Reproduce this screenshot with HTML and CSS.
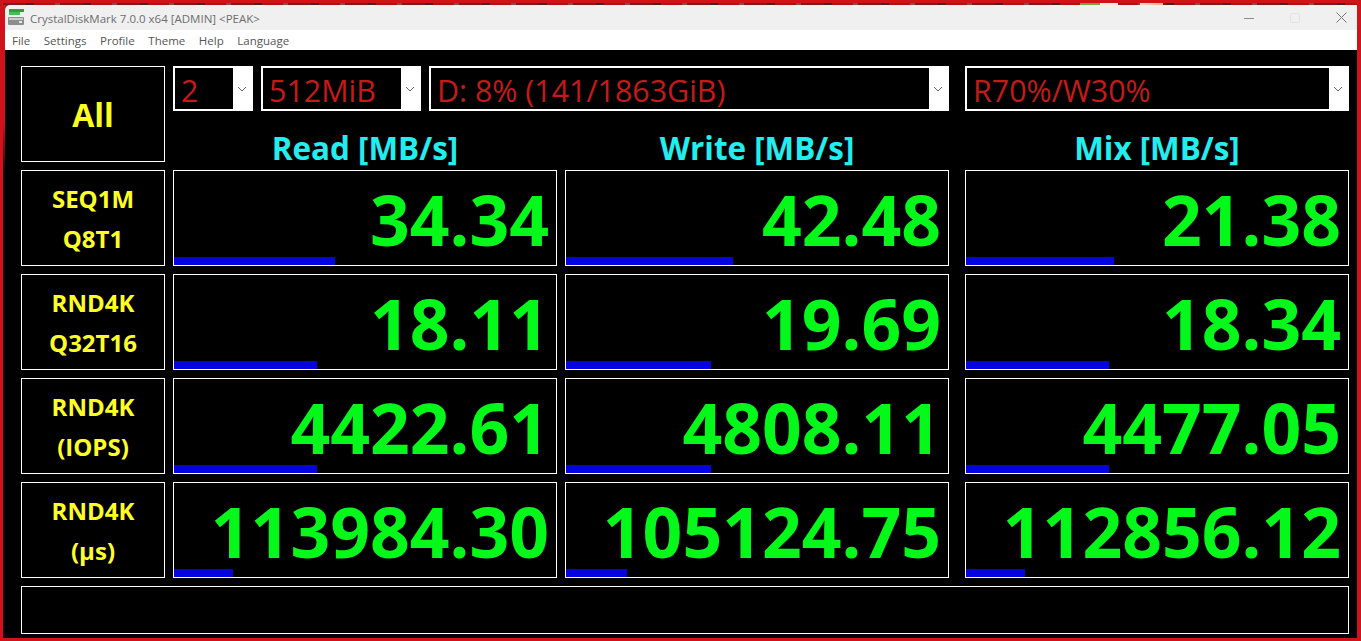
FILE: index.html
```html
<!DOCTYPE html>
<html lang="en">
<head>
  <meta charset="UTF-8">
  <title>CrystalDiskMark 7.0.0 x64 [ADMIN] &lt;PEAK&gt;</title>
  <link rel="stylesheet" href="styles.css">
</head>
<body>
  <div class="wallpaper">
    <div class="window">
      <div class="titlebar">
        <svg class="app-icon" width="16" height="17" viewBox="0 0 16 17">
          <rect x="1" y="0" width="15" height="3" fill="#2f9e3f"/>
          <rect x="1" y="3" width="11" height="3" fill="#4dbb58"/>
          <rect x="0" y="8" width="16" height="8" rx="1" fill="#8a8f8c"/>
          <rect x="1" y="9" width="14" height="2" fill="#c9cdca"/>
          <rect x="11" y="12" width="3" height="2" fill="#e4e6e4"/>
        </svg>
        <span class="title">CrystalDiskMark 7.0.0 x64 [ADMIN] &lt;PEAK&gt;</span>
        <div class="controls">
          <svg width="10" height="10" viewBox="0 0 10 10"><path d="M0 5.5H10" stroke="#8c8c8c"/></svg>
          <svg width="12" height="12" viewBox="0 0 12 12"><rect x="1.5" y="1.5" width="9" height="9" rx="1" fill="none" stroke="#e2e2e2"/></svg>
          <svg width="11" height="11" viewBox="0 0 11 11"><path d="M.5 .5L10.5 10.5M10.5 .5L.5 10.5" stroke="#777"/></svg>
        </div>
      </div>
      <div class="menubar">
        <span>File</span>
        <span>Settings</span>
        <span>Profile</span>
        <span>Theme</span>
        <span>Help</span>
        <span>Language</span>
      </div>
      <div class="main">
        <div class="box all-btn">All</div>
        <div class="combos">
          <div class="combo combo-count"><span class="combo-text">2</span><span class="combo-arrow"><svg width="10" height="6" viewBox="0 0 10 6"><path d="M1 1L5 5L9 1" fill="none" stroke="#666"/></svg></span></div>
          <div class="combo combo-size"><span class="combo-text">512MiB</span><span class="combo-arrow"><svg width="10" height="6" viewBox="0 0 10 6"><path d="M1 1L5 5L9 1" fill="none" stroke="#666"/></svg></span></div>
          <div class="combo combo-drive"><span class="combo-text">D: 8% (141/1863GiB)</span><span class="combo-arrow"><svg width="10" height="6" viewBox="0 0 10 6"><path d="M1 1L5 5L9 1" fill="none" stroke="#666"/></svg></span></div>
          <div class="combo combo-mix"><span class="combo-text">R70%/W30%</span><span class="combo-arrow"><svg width="10" height="6" viewBox="0 0 10 6"><path d="M1 1L5 5L9 1" fill="none" stroke="#666"/></svg></span></div>
        </div>

        <div class="head">Read [MB/s]</div>
        <div class="head">Write [MB/s]</div>
        <div class="head mix-col">Mix [MB/s]</div>

        <div class="box test-name">SEQ1M<br>Q8T1</div>
        <div class="box result"><div class="value">34.34</div><div class="bar" style="width: 161px"></div></div>
        <div class="box result"><div class="value">42.48</div><div class="bar" style="width: 167px"></div></div>
        <div class="box result mix-col"><div class="value">21.38</div><div class="bar" style="width: 148px"></div></div>

        <div class="box test-name">RND4K<br>Q32T16</div>
        <div class="box result"><div class="value">18.11</div><div class="bar" style="width: 143px"></div></div>
        <div class="box result"><div class="value">19.69</div><div class="bar" style="width: 145px"></div></div>
        <div class="box result mix-col"><div class="value">18.34</div><div class="bar" style="width: 143px"></div></div>

        <div class="box test-name">RND4K<br>(IOPS)</div>
        <div class="box result"><div class="value">4422.61</div><div class="bar" style="width: 143px"></div></div>
        <div class="box result"><div class="value">4808.11</div><div class="bar" style="width: 145px"></div></div>
        <div class="box result mix-col"><div class="value">4477.05</div><div class="bar" style="width: 143px"></div></div>

        <div class="box test-name">RND4K<br>(µs)</div>
        <div class="box result"><div class="value">113984.30</div><div class="bar" style="width: 59px"></div></div>
        <div class="box result"><div class="value">105124.75</div><div class="bar" style="width: 61px"></div></div>
        <div class="box result mix-col"><div class="value">112856.12</div><div class="bar" style="width: 59px"></div></div>

        <div class="box status"></div>
      </div>
    </div>
  </div>
</body>
</html>
```

FILE: styles.css
```css
html, body {
  height: 100%;
}

body {
  margin: 0;
  padding: 3px 4px 3px 3px;
  box-sizing: border-box;
  overflow: hidden;
  background-color: #d0121a;
  font-family: "Open Sans", "Liberation Sans", sans-serif;
}

/* desktop showing behind the window, a thin strip on top and left */
.wallpaper {
  height: 100%;
  box-sizing: border-box;
  padding: 2px 0 0 2px;
  background-color: #0c0c18;
  background-image:
    linear-gradient(90deg, transparent 1077px, #6fa84a 1077px, #6fa84a 1097px, #f2e8e4 1097px, #f2e8e4 1115px, transparent 1115px, transparent 1137px, #f0d8d0 1137px, #f0a890 1160px, transparent 1160px),
    repeating-linear-gradient(90deg, #7a1a22 0, #7a1a22 23px, #3a2430 23px, #3a2430 31px, #a8141c 31px, #a8141c 52px, #6a5560 52px, #6a5560 57px),
    linear-gradient(#d0121a 120px, #0c0c18 170px);
  background-size: 100% 2px, 100% 2px, 100% 100%;
  background-repeat: no-repeat;
}

.window {
  height: 100%;
  display: flex;
  flex-direction: column;
  background-color: #000;
  border-top-left-radius: 5px;
  overflow: hidden;
}

.titlebar {
  height: 25px;
  display: flex;
  align-items: center;
  padding: 0 10px 0 3px;
  background-color: #f0f0f0;
  flex-shrink: 0;
}

.app-icon {
  margin-right: 6px;
}

.title {
  padding-top: 1px;
  font-size: 11.5px;
  color: #6e6e6e;
}

.controls {
  margin-left: auto;
  display: flex;
  align-items: center;
  gap: 35px;
}

.menubar {
  height: 20px;
  display: flex;
  align-items: center;
  gap: 13.6px;
  padding: 0 7px;
  background-color: #fff;
  font-size: 11.5px;
  color: #555;
  flex-shrink: 0;
}

.main {
  flex: 1;
  display: grid;
  grid-template-columns: 144px 384px 384px 392px;
  grid-template-rows: 45px 43px repeat(4, 96px) 48px;
  gap: 8px;
  padding: 16px 8px 4px 16px;
}

.box {
  box-sizing: border-box;
  border: 1px solid #fff;
  background-color: #000;
}

.all-btn {
  grid-row: span 2;
  display: flex;
  align-items: center;
  justify-content: center;
  color: #ffff1e;
  font-size: 32px;
  font-weight: 700;
}

.combos {
  grid-column: 2 / -1;
  display: flex;
}

.combo {
  box-sizing: border-box;
  display: flex;
  border: 2px solid #fff;
  background-color: #fff;
}

.combo-count { width: 80px; margin-right: 8px; }
.combo-size { width: 160px; margin-right: 8px; }
.combo-drive { width: 520px; margin-right: 16px; }
.combo-mix { width: 384px; }

.combo-text {
  flex: 1;
  padding: 4px 0 0 6px;
  background-color: #000;
  color: #c41a1a;
  font-size: 30.4px;
  line-height: 37px;
  white-space: nowrap;
}

.combo-arrow {
  width: 18px;
  display: flex;
  align-items: center;
  justify-content: center;
}

.head {
  display: flex;
  align-items: flex-end;
  justify-content: center;
  color: #22eef0;
  font-size: 31.4px;
  font-weight: 700;
  line-height: 28px;
}

.mix-col {
  margin-left: 8px;
}

.test-name {
  display: flex;
  align-items: center;
  justify-content: center;
  padding-top: 2px;
  text-align: center;
  color: #ffff28;
  font-size: 24px;
  font-weight: 700;
  line-height: 40px;
}

.result {
  display: flex;
  flex-direction: column;
}

.value {
  flex: 1;
  padding: 10px 7px 0 0;
  text-align: right;
  color: #04f81a;
  font-size: 69.6px;
  font-weight: 700;
  line-height: 76px;
  white-space: nowrap;
}

.bar {
  height: 8px;
  background-color: #0404e0;
}

.status {
  grid-column: 1 / -1;
}
```
